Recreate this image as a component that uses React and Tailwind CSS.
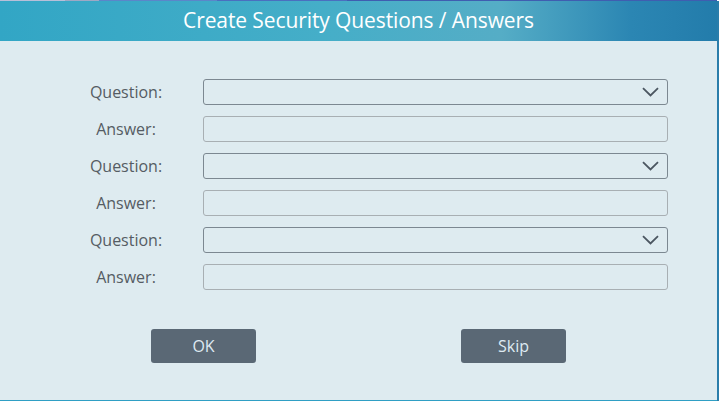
const rows = ['Question:', 'Answer:', 'Question:', 'Answer:', 'Question:', 'Answer:']

/* Thin down-chevron used inside the dropdown fields. */
function Chevron() {
  return (
    <svg className="w-[17px] h-[10px]" viewBox="0 0 17 10" fill="none">
      <path d="M1 1.2 L8.5 8.5 L16 1.2" stroke="#4b5661" strokeWidth="1.8" />
    </svg>
  )
}

export default function App() {
  return (
    <div
      className="w-[721px] h-[401px] bg-white overflow-hidden flex flex-col"
      style={{ fontFamily: '"Open Sans", "Noto Sans", sans-serif' }}
    >
      {/* Sliver of the window behind the dialog */}
      <div className="h-px flex">
        <div className="w-[65px] bg-[#b9bfd8]" />
        <div className="w-[34px] bg-[#9fa8c4]" />
        <div className="w-[118px] bg-[#5b86c9]" />
        <div className="w-[130px] bg-[#4a6fbf]" />
        <div className="flex-1 bg-[#3f5eb0]" />
        <div className="w-[4px] bg-white" />
      </div>
      <div className="flex-1 flex">
        <div className="w-[717px] flex flex-col border-b border-[#2f9fc4]">
          {/* Header */}
          <div className="h-[40px] flex items-center justify-center bg-[linear-gradient(90deg,#32a6c5_0%,#45aec8_45%,#55adc6_70%,#2b86b3_88%,#237cab_100%)]">
            <span className="text-white text-[21px] tracking-[-0.1px]">Create Security Questions / Answers</span>
          </div>
          {/* Body */}
          <div className="flex-1 bg-[#deebf0] flex flex-col">
            <div className="pt-[38px] flex flex-col gap-[11px]">
              {rows.map((label, i) => (
                <div key={i} className="flex items-center h-[26px]">
                  <div className="w-[203px] pl-[76px] pr-[27px] flex justify-center text-[16px] text-[#555c63]">
                    <span className="w-[100px] text-center">{label}</span>
                  </div>
                  {i % 2 === 0 ? (
                    <div className="w-[465px] h-[26px] rounded-[3px] border border-[#7c8891] flex items-center justify-end pr-[8px]">
                      <Chevron />
                    </div>
                  ) : (
                    <div className="w-[465px] h-[26px] rounded-[3px] border border-[#a8afb3]" />
                  )}
                </div>
              ))}
            </div>
            <div className="mt-[39px] flex pl-[151px] gap-[205px]">
              <button className="w-[105px] h-[34px] rounded-[3px] bg-[#5a6875] text-[#dfeaf2] text-[16px]">OK</button>
              <button className="w-[105px] h-[34px] rounded-[3px] bg-[#5a6875] text-[#dfeaf2] text-[16px]">Skip</button>
            </div>
          </div>
        </div>
        <div className="w-[2px] bg-[#2a7daa]" />
        <div className="flex-1 bg-white" />
      </div>
    </div>
  )
}
